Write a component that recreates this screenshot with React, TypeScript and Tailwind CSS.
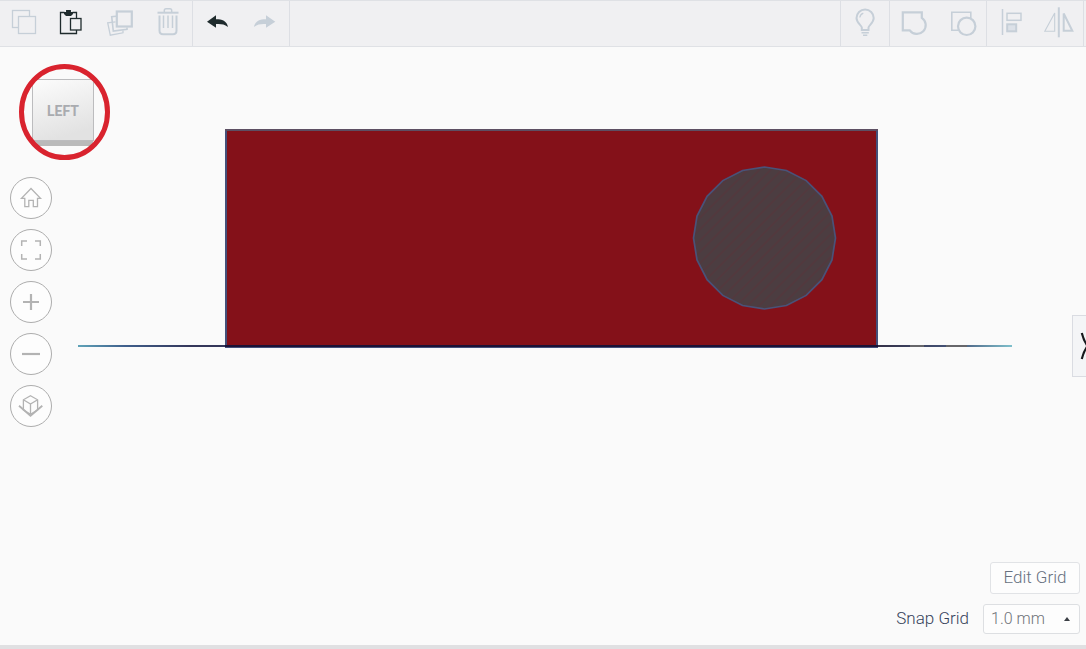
import React, { useState } from "react";

interface ToolButtonProps {
  label: string;
  disabled?: boolean;
  children: React.ReactNode;
}

const ToolButton: React.FC<ToolButtonProps> = ({ label, disabled = true, children }) => (
  <button
    type="button"
    aria-label={label}
    title={label}
    disabled={disabled}
    className={disabled ? "h-full w-12 text-[#c6cfd8]" : "h-full w-12 text-[#1f2b2d]"}
  >
    <svg width="48" height="45" viewBox="0 0 48 45" fill="none" stroke="currentColor" strokeWidth="1.3">
      {children}
    </svg>
  </button>
);

const ViewButton: React.FC<{ label: string; children: React.ReactNode }> = ({ label, children }) => (
  <button
    type="button"
    aria-label={label}
    title={label}
    className="flex size-[42px] items-center justify-center rounded-full border border-[#adadad] bg-[#fdfdfd] text-[#b3b3b3]"
  >
    <svg
      width="42"
      height="42"
      viewBox="0 0 42 42"
      fill="none"
      stroke="currentColor"
      strokeWidth="1.3"
      className="shrink-0"
    >
      {children}
    </svg>
  </button>
);

const ToolGroup: React.FC<{ children: React.ReactNode }> = ({ children }) => (
  <div className="flex border-r border-[#dddfe4]">{children}</div>
);

const Toolbar = () => (
  <header className="flex h-[47px] justify-between border-y border-[#dfe1e5] bg-[#f0f0f2]">
    <div className="flex">
      <ToolGroup>
        <ToolButton label="Copy">
          <rect x="12.5" y="9.5" width="17" height="17" />
          <rect x="18.5" y="15.5" width="17" height="17" fill="#f0f0f2" />
        </ToolButton>
        <ToolButton label="Paste" disabled={false}>
          <path d="M16.5 11.5H12.5V32.5H28.5V29M24.5 11.5H28.5V17.5" />
          <path d="M16 11h2.8V9.5h3.4V11H25v2l-2 2h-5l-2-2z" fill="currentColor" stroke="none" />
          <path d="M18.7 11V9.7h3.6V11" />
          <rect x="22.5" y="17.5" width="10.5" height="11.5" />
        </ToolButton>
        <ToolButton label="Duplicate">
          <path d="M19.5 20.8L11.7 21.8L14.3 34.2L27 31.8V29.5" />
          <path d="M20 15.2L15.7 15.7L17.3 30L31 28.3V26.5" strokeWidth="1.6" />
          <rect x="20.8" y="10.5" width="15" height="15" strokeWidth="2.2" />
        </ToolButton>
        <ToolButton label="Delete">
          <path d="M20.3 11V9.5Q20.3 7.7 22 7.7H26Q27.7 7.7 27.7 9.5V11" strokeWidth="1.5" />
          <path d="M13.5 11.7H34.5" strokeWidth="2" />
          <path d="M15.5 14.5V29.5Q15.5 33.3 19 33.3H29Q32.5 33.3 32.5 29.5V14.5" strokeWidth="2" />
          <path d="M19.5 14.5V27M24 14.5V27M28.5 14.5V27" strokeWidth="1.5" />
        </ToolButton>
      </ToolGroup>
      <ToolGroup>
        <ToolButton label="Undo" disabled={false}>
          <path d="M14 20.7L23 14.3V18.3C29 18.3 34 20 35 26C31 23 28 22.8 23 23V26.8Z" fill="currentColor" stroke="none" />
        </ToolButton>
        <ToolButton label="Redo">
          <path d="M34.3 20.7L25 14.3V18.3C19 18.3 14 20 13 26C17 23 20 22.8 25 23V26.8Z" fill="currentColor" stroke="none" />
        </ToolButton>
      </ToolGroup>
    </div>

    <div className="flex border-l border-[#dddfe4] mr-0.5">
      <ToolGroup>
        <ToolButton label="Show all">
          <path d="M20.8 29V26.5C20.8 24.5 15.5 22 15.5 17A8.6 8.6 0 0 1 32.7 17C32.7 22 27.5 24.5 27.5 26.5V29Z" strokeWidth="2" />
          <path d="M18.8 16.5Q19.3 13.3 22.3 12.2" />
          <path d="M20.5 31.7H27.8M22 34.3H26.3" strokeWidth="1.5" />
        </ToolButton>
      </ToolGroup>
      <ToolGroup>
        <ToolButton label="Group">
          <path d="M12.8 11.3H31.8V16.8A8.8 8.8 0 1 1 19.8 29.3H12.8Z" strokeWidth="2.2" />
        </ToolButton>
        <ToolButton label="Ungroup">
          <path d="M20.5 29.3H13.8V11.3H32.8V17.5" strokeWidth="1.6" />
          <circle cx="28.7" cy="25.3" r="8.7" strokeWidth="2.2" />
        </ToolButton>
      </ToolGroup>
      <ToolGroup>
        <ToolButton label="Align">
          <path d="M15.5 8V34" strokeWidth="1.5" />
          <rect x="20" y="12.3" width="14" height="7" strokeWidth="1.5" />
          <rect x="20.2" y="23.3" width="9" height="7" strokeWidth="2" fill="#dce1e8" />
        </ToolButton>
        <ToolButton label="Mirror">
          <path d="M23.8 6.3V36.3" strokeWidth="2" />
          <path d="M19.7 12V30.2H9.8Z" strokeWidth="1.1" />
          <path d="M28.7 12.5V29.8H37.3Z" strokeWidth="2" />
        </ToolButton>
      </ToolGroup>
    </div>
  </header>
);

const ViewCube = () => (
  <button type="button" className="ml-[19px] h-24 w-[91px]" aria-label="View cube, left">
    <svg width="91" height="96" viewBox="19 64 91 96">
      <defs>
        <linearGradient id="face" x1="0" y1="0" x2="0.3" y2="1">
          <stop offset="0" stopColor="#fcfcfc" />
          <stop offset="1" stopColor="#e2e2e2" />
        </linearGradient>
      </defs>
      <path d="M33 140H93V143L91 146H36Z" fill="#bababa" />
      <rect x="32.5" y="79.5" width="61" height="61" fill="url(#face)" stroke="#bcbcbe" />
      <text
        x="63"
        y="116"
        textAnchor="middle"
        fill="#a9abaf"
        className="font-['Roboto',sans-serif] text-[14px] font-bold"
      >
        LEFT
      </text>
      <ellipse cx="64.5" cy="112" rx="43" ry="45.5" fill="none" stroke="#d9232e" strokeWidth="5" />
    </svg>
  </button>
);

// 20-sided cylinder seen from its end
const holePoints = Array.from({ length: 20 }, (_, i) => {
  const a = (i * Math.PI) / 10;
  return `${(764.5 + 71 * Math.sin(a)).toFixed(1)},${(238 - 71 * Math.cos(a)).toFixed(1)}`;
}).join(" ");

const Scene = () => (
  <svg viewBox="78 128 934 221" className="w-full" role="img" aria-label="Workplane">
    <defs>
      <linearGradient id="plane" gradientUnits="userSpaceOnUse" x1="78" y1="0" x2="1012" y2="0">
        <stop offset="0" stopColor="#5fa3b8" />
        <stop offset="0.05" stopColor="#3f5f8c" />
        <stop offset="0.12" stopColor="#34365a" />
        <stop offset="0.86" stopColor="#34324a" />
        <stop offset="0.94" stopColor="#45557a" />
        <stop offset="1" stopColor="#7fc0cc" />
      </linearGradient>
      <pattern id="hatch" width="8" height="8" patternUnits="userSpaceOnUse" patternTransform="rotate(45)">
        <rect width="8" height="8" fill="#4c3d41" />
        <rect width="2" height="8" fill="#52393e" />
      </pattern>
    </defs>
    <rect x="226" y="130" width="651" height="217" fill="#841119" stroke="#44507a" strokeWidth="2" />
    <path d="M225 130H878" stroke="#5d4f63" strokeWidth="2" />
    <polygon points={holePoints} fill="url(#hatch)" stroke="#4a5278" strokeWidth="1.7" />
    <rect x="78" y="345" width="934" height="2" fill="url(#plane)" />
    <path d="M910 346H924M946 346H967" stroke="#66666a" strokeWidth="2" />
    <path d="M225 346H878" stroke="#1c1236" strokeWidth="2" />
  </svg>
);

export default function App() {
  const [snap, setSnap] = useState("1.0");

  return (
    <div className="flex min-h-screen flex-col overflow-hidden bg-[#fafafa] font-['Roboto',sans-serif]">
      <Toolbar />

      <main className="flex flex-1 flex-col">
        <div className="flex">
          <nav className="flex w-[78px] shrink-0 flex-col gap-[17px] pt-[17px]" aria-label="View controls">
            <ViewCube />
            <div className="flex flex-col gap-2.5 pl-2.5">
              <ViewButton label="Home view">
                <path d="M21 11.5L11.5 21.3H14.8V29.7H18.8V23.3H23.3V29.7H27.5V21.3H30.5Z" />
              </ViewButton>
              <ViewButton label="Fit all in view">
                <path d="M11.7 17V12H17M25 12H30.3V17M30.3 25V30H25M17 30H11.7V25" strokeWidth="1.5" />
              </ViewButton>
              <ViewButton label="Zoom in">
                <path d="M13 21H29M21 13V29" strokeWidth="2.2" />
              </ViewButton>
              <ViewButton label="Zoom out">
                <path d="M12 21H30" strokeWidth="2.2" />
              </ViewButton>
              <ViewButton label="Switch to flat view">
                <path d="M20.5 10.8L27.6 14.8V25L20.5 29.3L13.4 25V14.8ZM13.4 14.8L20.5 19L27.6 14.8M20.5 19V29.3" />
                <path d="M9 20.8L20.5 30.8L32.3 20.8" strokeWidth="1.8" />
              </ViewButton>
            </div>
          </nav>

          <div className="min-w-0 flex-1 pt-[81px]">
            <Scene />
          </div>

          <div className="flex w-[74px] shrink-0 justify-end pt-[268px]">
            <button
              type="button"
              aria-label="Toggle shapes panel"
              className="h-[62px] w-3.5 overflow-hidden border border-r-0 border-[#dadce2] bg-[#f4f5f7]"
            >
              <svg width="13" height="60" viewBox="0 0 13 60" fill="none" stroke="#17191c" strokeWidth="2.2">
                <path d="M8.8 17Q10.8 25 14.5 30Q10.8 35 8.8 43" />
              </svg>
            </button>
          </div>
        </div>

        <div className="mt-auto flex flex-col items-end gap-2.5 pr-1.5 pb-[11px]">
          <button
            type="button"
            className="h-8 w-[90px] rounded-[3px] border border-[#e1e3e6] bg-[#fdfdfd] pb-0.5 text-[17px] leading-5 font-light text-[#68717f]"
          >
            Edit Grid
          </button>
          <div className="flex h-[30px] items-center">
            <label htmlFor="snap" className="mr-3.5 pb-0.5 text-[17px] leading-5 font-light text-[#37435a]">
              Snap Grid
            </label>
            <div className="relative">
              <select
                id="snap"
                value={snap}
                onChange={(e) => setSnap(e.target.value)}
                className="block h-[30px] w-[97px] appearance-none rounded-[3px] border border-[#dddfe2] bg-[#fdfdfd] pl-[7px] text-[16px] leading-5 font-light text-[#6f7379]"
              >
                <option value="0.1">0.1 mm</option>
                <option value="0.5">0.5 mm</option>
                <option value="1.0">1.0 mm</option>
                <option value="2.0">2.0 mm</option>
              </select>
              <svg
                width="6"
                height="4"
                viewBox="0 0 6 4"
                className="pointer-events-none absolute top-[13px] right-2.5"
              >
                <path d="M0 4L3 0L6 4Z" fill="#3b3f45" />
              </svg>
            </div>
          </div>
        </div>
      </main>

      <div className="h-1 bg-[#e0e0e2]" />
    </div>
  );
}
